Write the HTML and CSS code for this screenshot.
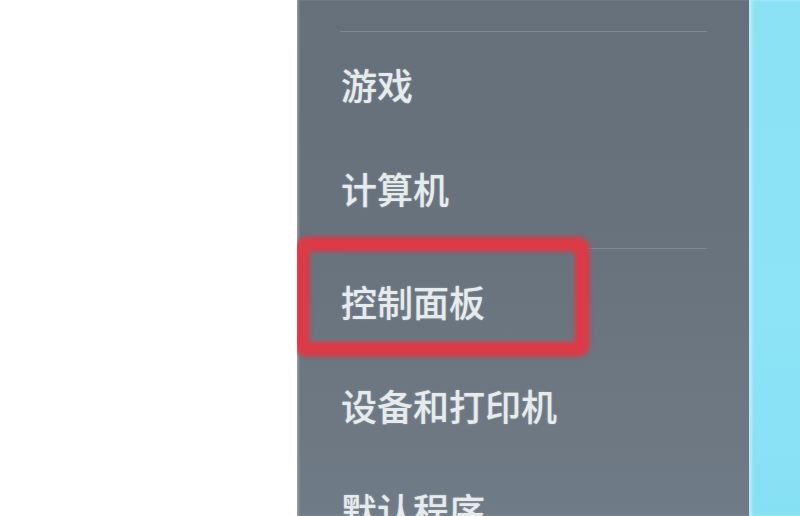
FILE: index.html
```html
<!DOCTYPE html>
<html lang="zh-CN">
<head>
    <meta charset="UTF-8">
    <meta name="viewport" content="width=device-width, initial-scale=1.0">
    <title>开始菜单</title>
    <link rel="stylesheet" href="styles.css">
</head>
<body>
    <div class="screen">
        <div class="blank"></div>
        <div class="menu-pane">
            <div class="divider"></div>
            <div class="menu-item">游戏</div>
            <div class="menu-item">计算机</div>
            <div class="divider divider-gap"></div>
            <div class="menu-item highlighted">
                控制面板
                <span class="mark-box"></span>
            </div>
            <div class="menu-item">设备和打印机</div>
            <div class="menu-item">默认程序</div>
        </div>
        <div class="desktop"></div>
    </div>
</body>
</html>
```

FILE: styles.css
```css
html, body {
    margin: 0;
    padding: 0;
    height: 100%;
    overflow: hidden;
}
body {
    font-family: "Noto Sans CJK SC", "Noto Sans", sans-serif;
    background: #fff;
}
.screen {
    display: flex;
    height: 516px;
    overflow: hidden;
}
.blank {
    width: 297px;
    background: #fff;
    flex-shrink: 0;
}
.menu-pane {
    width: 452px;
    flex-shrink: 0;
    padding-top: 31px;
    overflow: hidden;
    background: linear-gradient(to bottom, #66707a, #69737d 50%, #6f7b86);
    box-shadow: inset 2px 0 2px rgba(255, 255, 255, 0.25);
}
.divider {
    height: 1px;
    margin: 0 42px 0 43px;
    background: #7e8892;
}
.divider-gap {
    margin-top: 8px;
}
.menu-item {
    position: relative;
    height: 104px;
    line-height: 104px;
    padding-left: 44px;
    font-size: 36px;
    font-weight: 500;
    color: #e6ebee;
    white-space: nowrap;
    text-shadow: 0 0 2px rgba(255, 255, 255, 0.35);
}
.mark-box {
    position: absolute;
    left: -2px;
    top: -12px;
    width: 295px;
    height: 120px;
    box-sizing: border-box;
    border: 15px solid #dc3a47;
    border-radius: 12px;
    filter: blur(2px);
}
.desktop {
    flex: 1;
    background: linear-gradient(to bottom, #8ce2f5, #8de4f7 60%, #86e0f4);
    box-shadow: inset 3px 0 3px rgba(255, 255, 255, 0.4);
}
```
